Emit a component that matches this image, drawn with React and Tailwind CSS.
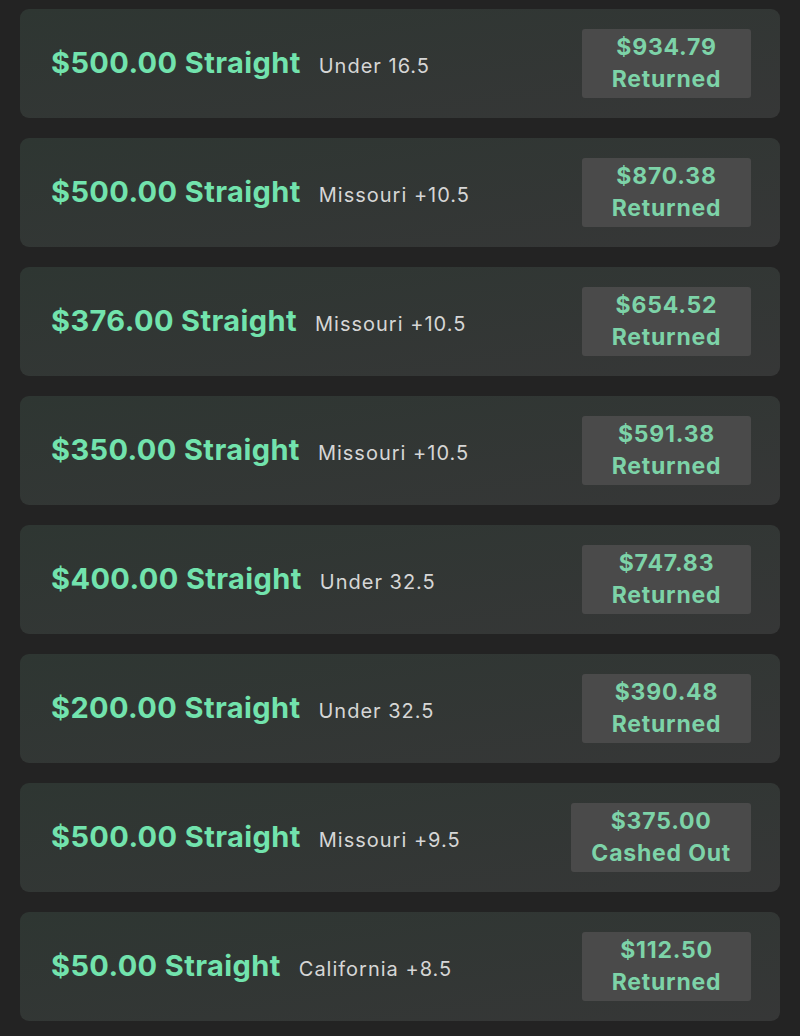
import React from "react";

const bets = [
  { stake: "$500.00", pick: "Under 16.5", amount: "$934.79", status: "Returned" },
  { stake: "$500.00", pick: "Missouri +10.5", amount: "$870.38", status: "Returned" },
  { stake: "$376.00", pick: "Missouri +10.5", amount: "$654.52", status: "Returned" },
  { stake: "$350.00", pick: "Missouri +10.5", amount: "$591.38", status: "Returned" },
  { stake: "$400.00", pick: "Under 32.5", amount: "$747.83", status: "Returned" },
  { stake: "$200.00", pick: "Under 32.5", amount: "$390.48", status: "Returned" },
  { stake: "$500.00", pick: "Missouri +9.5", amount: "$375.00", status: "Cashed Out" },
  { stake: "$50.00", pick: "California +8.5", amount: "$112.50", status: "Returned" },
];

const BetCard = ({ bet }) => (
  <div className="flex h-[109px] items-center justify-between rounded-[9px] bg-gradient-to-br from-[#2e3632] to-[#363737] pl-[31px] pr-[29px]">
    <div className="flex items-baseline gap-[18px] pb-[2px]">
      <span className="text-[29px] font-bold tracking-[0.4px] text-[#72e3ad]">
        {bet.stake} Straight
      </span>
      <span className="text-[20px] tracking-[1px] text-[#d6d6d6]">{bet.pick}</span>
    </div>
    <div className="flex min-w-[169px] flex-col items-center rounded-[3px] bg-[#4a4a4a] px-5 py-[3px] text-[23px] font-bold leading-[31.5px] tracking-[0.8px] text-[#7dd3a8]">
      <span>{bet.amount}</span>
      <span>{bet.status}</span>
    </div>
  </div>
);

export default function App() {
  return (
    <div
      className="min-h-[1036px] bg-[#232323] px-5 pt-[9px] pb-4"
      style={{ fontFamily: "Inter, 'Noto Sans', 'Liberation Sans', sans-serif" }}
    >
      <div className="flex flex-col gap-5">
        {bets.map((bet, i) => (
          <BetCard key={i} bet={bet} />
        ))}
      </div>
    </div>
  );
}
